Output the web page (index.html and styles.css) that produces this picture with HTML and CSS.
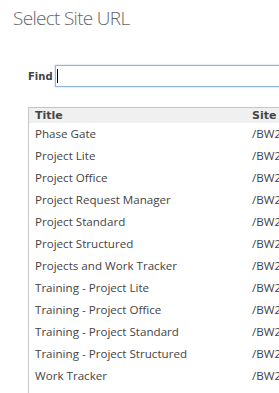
FILE: index.html
```html
<!DOCTYPE html>
<html lang="en">
<head>
    <meta charset="UTF-8">
    <title>Select Site URL</title>
    <link rel="stylesheet" href="styles.css">
</head>
<body>
    <div class="page">
        <h1>Select Site URL</h1>
        <div class="find-row">
            <label for="find">Find</label>
            <div class="find-box">
                <input type="text" id="find">
                <span class="caret"></span>
            </div>
        </div>
        <div class="site-list">
            <div class="list-head">
                <span class="col-title">Title</span>
                <span class="col-site">Site</span>
            </div>
            <div class="list-row"><span class="col-title">Phase Gate</span><span class="col-site">/BW2</span></div>
            <div class="list-row"><span class="col-title">Project Lite</span><span class="col-site">/BW2</span></div>
            <div class="list-row"><span class="col-title">Project Office</span><span class="col-site">/BW2</span></div>
            <div class="list-row"><span class="col-title">Project Request Manager</span><span class="col-site">/BW2</span></div>
            <div class="list-row"><span class="col-title">Project Standard</span><span class="col-site">/BW2</span></div>
            <div class="list-row"><span class="col-title">Project Structured</span><span class="col-site">/BW2</span></div>
            <div class="list-row"><span class="col-title">Projects and Work Tracker</span><span class="col-site">/BW2</span></div>
            <div class="list-row"><span class="col-title">Training - Project Lite</span><span class="col-site">/BW2</span></div>
            <div class="list-row"><span class="col-title">Training - Project Office</span><span class="col-site">/BW2</span></div>
            <div class="list-row"><span class="col-title">Training - Project Standard</span><span class="col-site">/BW2</span></div>
            <div class="list-row"><span class="col-title">Training - Project Structured</span><span class="col-site">/BW2</span></div>
            <div class="list-row"><span class="col-title">Work Tracker</span><span class="col-site">/BW2</span></div>
        </div>
    </div>
</body>
</html>
```

FILE: styles.css
```css
html, body {
    margin: 0;
    padding: 0;
    overflow: hidden;
    background: #fff;
}
body {
    font-family: "Open Sans", "Liberation Sans", sans-serif;
    color: #444;
}
.page {
    width: 279px;
    height: 393px;
    overflow: hidden;
}
h1 {
    font-size: 19px;
    font-weight: 300;
    letter-spacing: -0.7px;
    color: #666;
    margin: 0;
    padding: 4px 0 0 13px;
    line-height: 28px;
    white-space: nowrap;
}
.find-row {
    display: flex;
    align-items: center;
    margin-top: 33px;
    padding-left: 28px;
    width: 320px;
}
label {
    font-family: "DejaVu Sans", Verdana, sans-serif;
    font-size: 10px;
    font-weight: bold;
    color: #444;
    width: 27px;
}
.find-box {
    flex: 1;
    position: relative;
    display: flex;
}
input {
    flex: 1;
    height: 22px;
    box-sizing: border-box;
    border: 1px solid #92b4e3;
    border-radius: 0;
    box-shadow: 0 0 2px #b8cdec;
    outline: none;
    padding: 0 2px;
    font-size: 12px;
}
.caret {
    position: absolute;
    left: 2px;
    top: 4px;
    width: 1px;
    height: 14px;
    background: #000;
}
.site-list {
    margin: 20px 0 0 28px;
    width: 320px;
    border-top: 1px solid #c6c6c6;
    border-left: 1px solid #c6c6c6;
    height: 300px;
}
.list-head, .list-row {
    display: flex;
    align-items: center;
    padding-left: 6px;
    white-space: nowrap;
}
.list-head {
    height: 15px;
    background: #f0f0f0;
    font-family: "DejaVu Sans", Verdana, sans-serif;
    font-weight: bold;
    font-size: 11px;
    color: #444;
}
.list-row {
    height: 22px;
    font-size: 11.6px;
    padding-bottom: 2px;
    box-sizing: border-box;
}
.list-row:first-of-type {
    margin-top: 0;
}
.col-title {
    width: 217px;
}
```
